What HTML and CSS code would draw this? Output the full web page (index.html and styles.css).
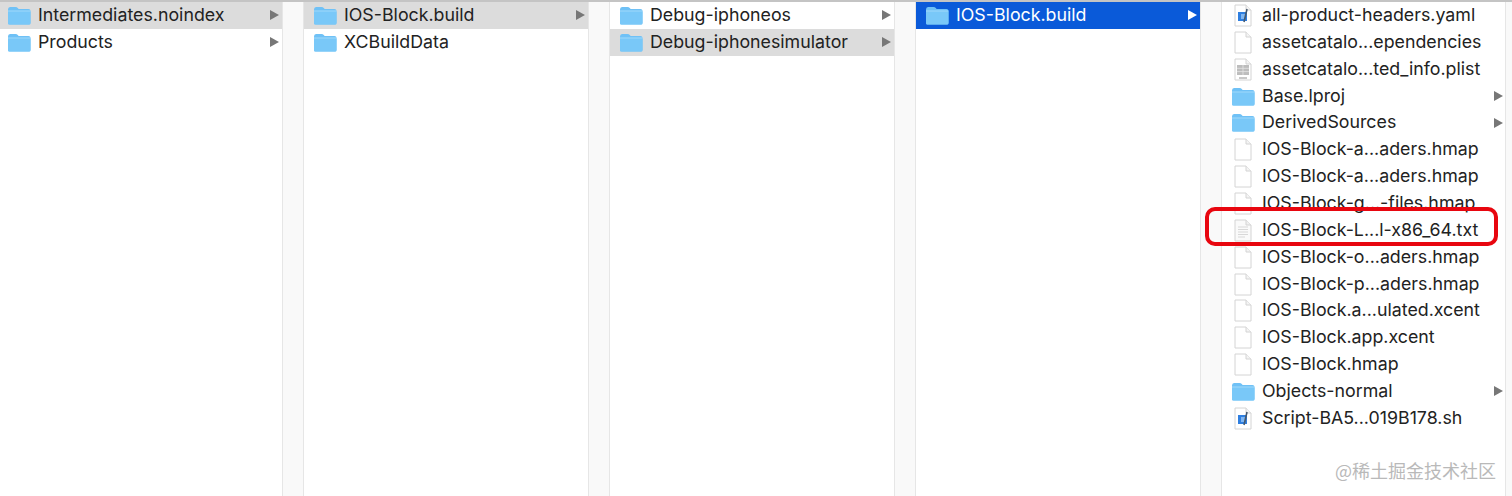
FILE: index.html
```html
<!DOCTYPE html>
<html lang="zh">
<head>
    <meta charset="UTF-8">
    <title>Finder</title>
    <link rel="stylesheet" href="styles.css">
</head>
<body>
    <svg class="defs" width="0" height="0">
        <symbol id="folder" viewBox="0 0 24 19">
            <path d="M1 3.5 Q1 1 3 1 H8.5 Q10 1 10.8 2 L11.6 3 H21.5 Q23.5 3 23.5 5 V17 Q23.5 18.5 22 18.5 H2.5 Q1 18.5 1 17 Z" fill="#6fc1f6"/>
            <path d="M1 5.5 H23.5 V17 Q23.5 18.5 22 18.5 H2.5 Q1 18.5 1 17 Z" fill="#79c8f8"/>
            <path d="M1 5 H23.5" stroke="#a5dbfb" stroke-width="1"/>
        </symbol>
        <symbol id="doc" viewBox="0 0 18 23">
            <path d="M1 1 H12 L17 6 V22 H1 Z" fill="#fff" stroke="#d4d4d4"/>
            <path d="M12 1 V6 H17" fill="#f4f4f4" stroke="#d4d4d4"/>
        </symbol>
        <symbol id="doc-text" viewBox="0 0 18 23">
            <path d="M1 1 H12 L17 6 V22 H1 Z" fill="#fafafa" stroke="#d4d4d4"/>
            <path d="M12 1 V6 H17" fill="#f0f0f0" stroke="#d4d4d4"/>
            <path d="M4 8 H14 M4 10.5 H14 M4 13 H14 M4 15.5 H14 M4 18 H11" stroke="#d8d8d8" stroke-width="1.2"/>
        </symbol>
        <symbol id="doc-plist" viewBox="0 0 18 23">
            <path d="M1 1 H12 L17 6 V22 H1 Z" fill="#fff" stroke="#d4d4d4"/>
            <path d="M12 1 V6 H17" fill="#f4f4f4" stroke="#d4d4d4"/>
            <rect x="3" y="7" width="12" height="10" fill="#bdbdbd"/>
            <path d="M9 7 V17 M3 10.3 H15 M3 13.6 H15" stroke="#e4e4e4" stroke-width="0.8"/>
            <path d="M5 20 H13" stroke="#b0b0b0" stroke-width="1.4"/>
        </symbol>
        <symbol id="doc-xcode" viewBox="0 0 18 23">
            <path d="M1 1 H12 L17 6 V22 H1 Z" fill="#fff" stroke="#d4d4d4"/>
            <path d="M12 1 V6 H17" fill="#f4f4f4" stroke="#d4d4d4"/>
            <path d="M4 8 H13 V17 H4 Z" fill="#2f7fe0"/>
            <path d="M7 10 H11 V15 H7 Z" fill="#7fb6f2"/>
            <path d="M13 5 L10 18" stroke="#44586e" stroke-width="1.6"/>
        </symbol>
    </svg>

    <div class="browser">
        <div class="column first">
            <div class="row inactive"><svg class="icon folder"><use href="#folder"/></svg><span class="name">Intermediates.noindex</span><i class="arrow"></i></div>
            <div class="row"><svg class="icon folder"><use href="#folder"/></svg><span class="name">Products</span><i class="arrow"></i></div>
        </div>
        <div class="column">
            <div class="row inactive"><svg class="icon folder"><use href="#folder"/></svg><span class="name">IOS-Block.build</span><i class="arrow"></i></div>
            <div class="row"><svg class="icon folder"><use href="#folder"/></svg><span class="name">XCBuildData</span></div>
        </div>
        <div class="column">
            <div class="row"><svg class="icon folder"><use href="#folder"/></svg><span class="name">Debug-iphoneos</span><i class="arrow"></i></div>
            <div class="row inactive"><svg class="icon folder"><use href="#folder"/></svg><span class="name">Debug-iphonesimulator</span><i class="arrow"></i></div>
        </div>
        <div class="column">
            <div class="row selected"><svg class="icon folder"><use href="#folder"/></svg><span class="name">IOS-Block.build</span><i class="arrow"></i></div>
        </div>
        <div class="column last">
            <div class="row"><svg class="icon file"><use href="#doc-xcode"/></svg><span class="name">all-product-headers.yaml</span></div>
            <div class="row"><svg class="icon file"><use href="#doc"/></svg><span class="name">assetcatalo...ependencies</span></div>
            <div class="row"><svg class="icon file"><use href="#doc-plist"/></svg><span class="name">assetcatalo...ted_info.plist</span></div>
            <div class="row"><svg class="icon folder"><use href="#folder"/></svg><span class="name">Base.lproj</span><i class="arrow"></i></div>
            <div class="row"><svg class="icon folder"><use href="#folder"/></svg><span class="name">DerivedSources</span><i class="arrow"></i></div>
            <div class="row"><svg class="icon file"><use href="#doc"/></svg><span class="name">IOS-Block-a...aders.hmap</span></div>
            <div class="row"><svg class="icon file"><use href="#doc"/></svg><span class="name">IOS-Block-a...aders.hmap</span></div>
            <div class="row"><svg class="icon file"><use href="#doc"/></svg><span class="name">IOS-Block-g...-files.hmap</span></div>
            <div class="row"><svg class="icon file"><use href="#doc-text"/></svg><span class="name">IOS-Block-L...l-x86_64.txt</span></div>
            <div class="row"><svg class="icon file"><use href="#doc"/></svg><span class="name">IOS-Block-o...aders.hmap</span></div>
            <div class="row"><svg class="icon file"><use href="#doc"/></svg><span class="name">IOS-Block-p...aders.hmap</span></div>
            <div class="row"><svg class="icon file"><use href="#doc"/></svg><span class="name">IOS-Block.a...ulated.xcent</span></div>
            <div class="row"><svg class="icon file"><use href="#doc"/></svg><span class="name">IOS-Block.app.xcent</span></div>
            <div class="row"><svg class="icon file"><use href="#doc"/></svg><span class="name">IOS-Block.hmap</span></div>
            <div class="row"><svg class="icon folder"><use href="#folder"/></svg><span class="name">Objects-normal</span><i class="arrow"></i></div>
            <div class="row"><svg class="icon file"><use href="#doc-xcode"/></svg><span class="name">Script-BA5...019B178.sh</span></div>
        </div>
    </div>

    <div class="highlight"></div>
    <div class="watermark">@稀土掘金技术社区</div>
</body>
</html>
```

FILE: styles.css
```css
* {
    margin: 0;
    padding: 0;
    box-sizing: border-box;
}

body {
    width: 1512px;
    height: 496px;
    overflow: hidden;
    position: relative;
    background: #f9f9f9;
    font-family: Inter, "Liberation Sans", sans-serif;
    color: #222;
}

.defs {
    position: absolute;
}

.browser {
    display: flex;
    gap: 20px;
    height: 496px;
    border-top: 2px solid #c4c4c4;
}

.column {
    width: 286px;
    background: #fff;
    border-left: 1px solid #e6e6e6;
    border-right: 1px solid #e6e6e6;
    display: grid;
    grid-auto-rows: 26.87px;
    align-content: start;
}

.column.first {
    width: 283px;
    border-left: none;
}

.column.last {
    width: 285px;
}

.row {
    display: flex;
    align-items: center;
    padding-left: 9px;
    padding-right: 3px;
    font-size: 17.8px;
    white-space: nowrap;
}

.first .row {
    padding-left: 7px;
}

.last .row {
    padding-right: 2px;
}

.inactive {
    background: #dcdcdc;
}

.selected {
    background: #0a5ad9;
    color: #fff;
}

.icon {
    flex: none;
}

.folder {
    width: 24px;
    height: 19px;
    margin-right: 7px;
}

.file {
    width: 18px;
    height: 23px;
    margin-left: 3px;
    margin-right: 10px;
}

.name {
    flex: 1;
    margin-top: -2px;
}

.arrow {
    flex: none;
    width: 0;
    height: 0;
    border-left: 9px solid #777;
    border-top: 5px solid transparent;
    border-bottom: 5px solid transparent;
}

.selected .arrow {
    border-left-color: #fff;
}

.highlight {
    position: absolute;
    left: 1205px;
    top: 207px;
    width: 293px;
    height: 39px;
    border: 4px solid #e8060f;
    border-radius: 10px;
}

.watermark {
    position: absolute;
    left: 1335px;
    top: 457px;
    font-size: 18px;
    color: #b9b9b9;
    font-family: "Noto Sans CJK SC", sans-serif;
}
```
